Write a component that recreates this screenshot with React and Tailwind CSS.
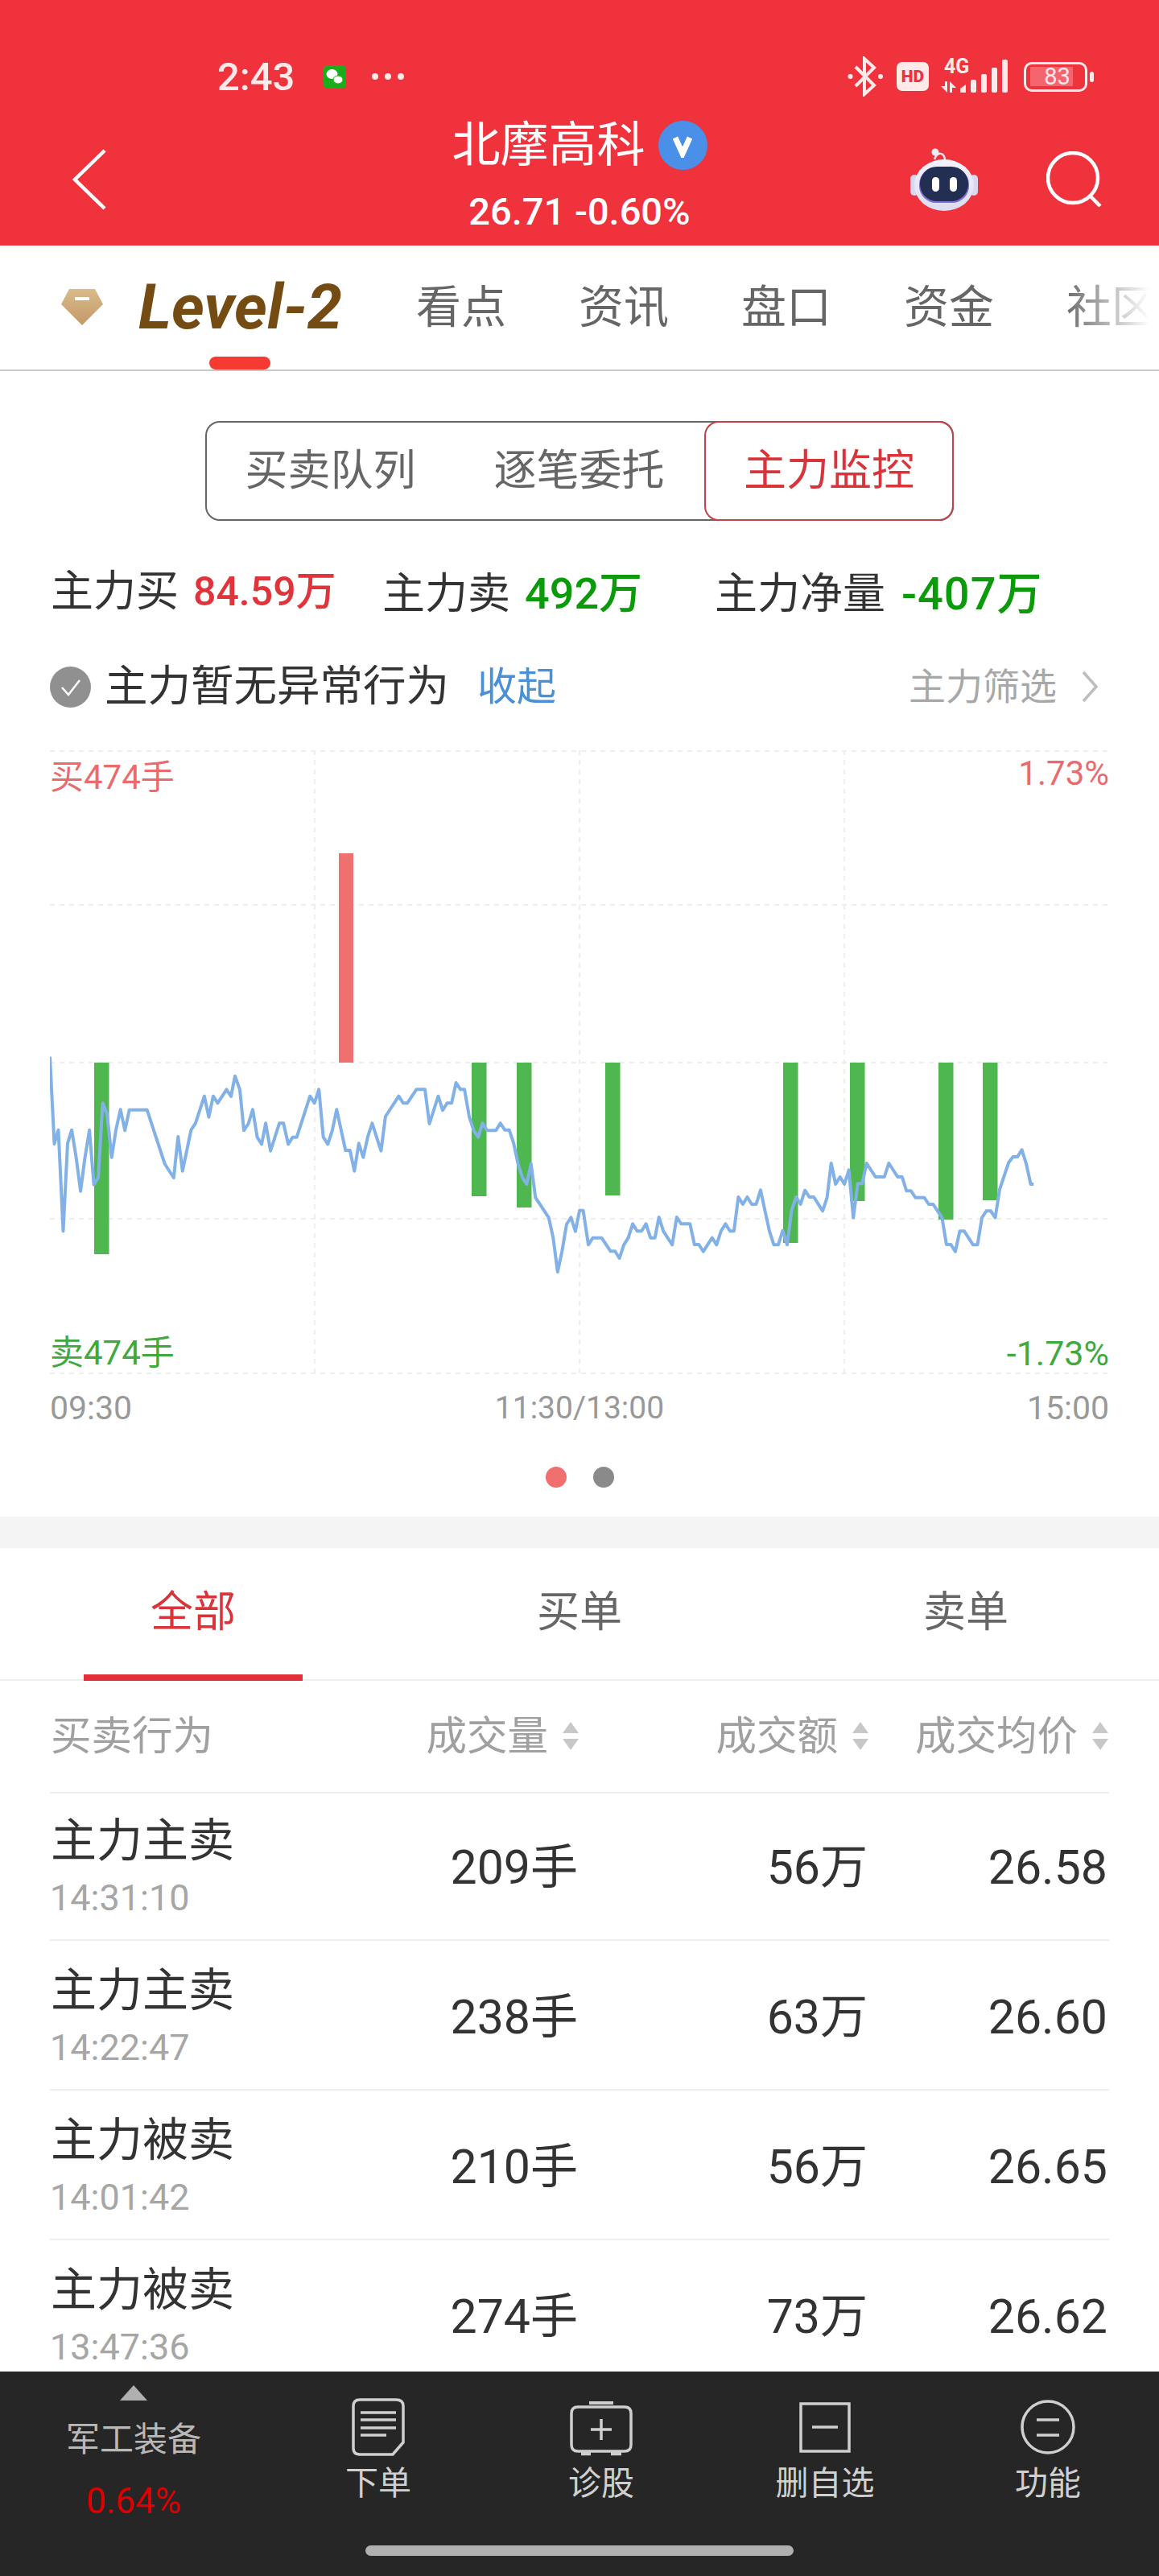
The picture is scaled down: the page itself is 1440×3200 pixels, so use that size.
const TAB_ITEMS = ['看点', '资讯', '盘口', '资金'];

const ROWS = [
  { name: '主力主卖', time: '14:31:10', vol: '209手', amount: '56万', price: '26.58' },
  { name: '主力主卖', time: '14:22:47', vol: '238手', amount: '63万', price: '26.60' },
  { name: '主力被卖', time: '14:01:42', vol: '210手', amount: '56万', price: '26.65' },
  { name: '主力被卖', time: '13:47:36', vol: '274手', amount: '73万', price: '26.62' },
];

// 分时线，坐标按页面像素换算到图表内
const LINE_LEFT = [
  [135, 95], [147, 420], [158, 368], [171, 745], [183, 418], [194, 368], [206, 470], [218, 596], [230, 470], [242, 368],
  [254, 572], [266, 545], [278, 268], [290, 310], [302, 470], [314, 365], [326, 292], [338, 370], [350, 293], [398, 293],
  [422, 395], [446, 495], [470, 546], [482, 393], [494, 521], [517, 368], [529, 343], [553, 242], [565, 320], [577, 242],
  [589, 268], [613, 217], [625, 243], [636, 167], [649, 218], [660, 370], [672, 345], [684, 292], [696, 395], [708, 421],
  [719, 343], [732, 446], [756, 343], [767, 343], [780, 421], [792, 395], [803, 395], [827, 293], [839, 242], [851, 268],
  [863, 217], [875, 395], [887, 421], [899, 370], [911, 292], [935, 444], [947, 444], [959, 521], [971, 418], [983, 470],
  [995, 395], [1007, 343], [1031, 446], [1043, 318], [1079, 242], [1091, 268], [1102, 268], [1127, 217], [1150, 217], [1162, 345],
  [1186, 242], [1198, 295], [1210, 268], [1222, 268], [1234, 192], [1246, 217], [1257, 217], [1270, 320], [1282, 370], [1294, 395],
  [1306, 343], [1318, 370], [1342, 370], [1354, 343], [1366, 368], [1378, 368], [1390, 418], [1402, 495], [1414, 546], [1425, 570],
  [1437, 494], [1449, 620], [1485, 695], [1497, 770], [1509, 897], [1521, 820], [1533, 720], [1545, 694], [1557, 746], [1568, 670],
];

const LINE_RIGHT = [
  [0, 668], [10, 668], [24, 796], [36, 770], [60, 770], [84, 820], [96, 820], [108, 846], [120, 796], [132, 770],
  [144, 718], [156, 745], [168, 745], [180, 718], [192, 770], [204, 770], [215, 693], [227, 745], [251, 796], [263, 693],
  [275, 718], [299, 718], [311, 795], [323, 795], [335, 821], [359, 770], [371, 796], [383, 745], [395, 718], [407, 745],
  [418, 745], [430, 618], [442, 645], [454, 618], [466, 645], [478, 645], [490, 592], [502, 670], [514, 745], [526, 796],
  [538, 796], [550, 743], [562, 796], [574, 668], [586, 618], [598, 645], [610, 593], [622, 618], [634, 618], [658, 670],
  [670, 620], [681, 492], [693, 570], [705, 543], [717, 570], [729, 517], [741, 695], [753, 568], [765, 568], [777, 492],
  [801, 543], [825, 543], [837, 492], [861, 543], [873, 543], [885, 595], [897, 595], [909, 620], [933, 620], [945, 645],
  [957, 645], [981, 695], [993, 795], [1005, 795], [1017, 821], [1029, 745], [1041, 745], [1065, 796], [1077, 796], [1089, 695],
  [1101, 670], [1113, 670], [1125, 695], [1137, 590], [1161, 490], [1173, 468], [1185, 468], [1197, 442], [1209, 495], [1221, 570],
  [1229, 570],
];

const linePoints = [
  ...LINE_LEFT.map(([x, y]) => [x / 2.178, 1280 + y / 3]),
  ...LINE_RIGHT.map(([x, y]) => [720 + x / 2.178, 1280 + y / 3]),
]
  .map(([x, y]) => `${(x - 62).toFixed(1)},${(y - 931).toFixed(1)}`)
  .join(' ');

const BARS = [
  { x: 117, bottom: 1557 },
  { x: 586, bottom: 1485 },
  { x: 642, bottom: 1499 },
  { x: 752, bottom: 1484 },
  { x: 973, bottom: 1543 },
  { x: 1056, bottom: 1491 },
  { x: 1166, bottom: 1514 },
  { x: 1221, bottom: 1490 },
];

const StatusBar = () => (
  <div className="h-[140px] pt-[50px] pl-[270px] pr-[81px] flex items-center text-[#ffe9e9]">
    <span className="text-[49px] leading-none font-medium">2:43</span>
    <svg className="ml-[36px]" width="28" height="29" viewBox="0 0 28 29">
      <rect width="28" height="29" rx="5" fill="#1aad19" />
      <ellipse cx="10.5" cy="11" rx="7" ry="6" fill="#fff" />
      <ellipse cx="18" cy="18" rx="6" ry="5" fill="#fff" stroke="#1aad19" strokeWidth="1" />
    </svg>
    <div className="ml-[32px] flex gap-[8px]">
      <span className="w-[8px] h-[8px] rounded-full bg-[#ffe9e9]" />
      <span className="w-[8px] h-[8px] rounded-full bg-[#ffe9e9]" />
      <span className="w-[8px] h-[8px] rounded-full bg-[#ffe9e9]" />
    </div>
    <div className="ml-auto flex items-center">
      <svg width="45" height="50" viewBox="0 0 45 50" fill="none" stroke="#ffe9e9" strokeWidth="4">
        <path d="M10 13 L33 36 L21 47 V3 L33 14 L10 37" />
        <circle cx="3.5" cy="25" r="3" fill="#ffe9e9" stroke="none" />
        <circle cx="41" cy="25" r="3" fill="#ffe9e9" stroke="none" />
      </svg>
      <div className="ml-[16px] w-[40px] h-[36px] rounded-[7px] bg-[#ffe9e9] flex items-center justify-center text-[21px] leading-none font-black text-[#f0323c]">
        HD
      </div>
      <div className="ml-[15px] relative w-[84px] h-[42px]">
        <span className="absolute left-[4px] -top-[4px] text-[25px] leading-[25px] font-bold">4G</span>
        <svg className="absolute left-0 top-0" width="84" height="42" viewBox="0 0 84 42" fill="#ffe9e9">
          <path d="M0 33 H5 V27 H8 V41 Z" />
          <path d="M11 27 L19 35 H14 V41 H11 Z" />
          <path d="M24 41 V36 L31 31 V41 Z" />
          <rect x="37" y="25" width="7" height="16" rx="2" />
          <rect x="50" y="18" width="7" height="23" rx="2" />
          <rect x="63" y="10" width="7" height="31" rx="2" />
          <rect x="76" y="0" width="7" height="41" rx="2" />
        </svg>
      </div>
      <div className="ml-[19px] relative w-[79px] h-[37px] rounded-[10px] border-[3px] border-[#ffe9e9] flex items-center justify-center">
        <span className="absolute left-[5px] top-[3px] w-[53px] h-[24px] bg-white/25" />
        <span className="relative pl-[4px] text-[29px] leading-none">83</span>
      </div>
      <span className="ml-[3px] w-[5px] h-[13px] rounded-full bg-[#ffe9e9]" />
    </div>
  </div>
);

const Robot = () => (
  <svg width="84" height="78" viewBox="0 0 84 78">
    <defs>
      <linearGradient id="shell" x1="0" y1="0" x2="0" y2="1">
        <stop offset="0" stopColor="#f4f2fb" />
        <stop offset="1" stopColor="#dcdcf2" />
      </linearGradient>
    </defs>
    <path d="M30 14 C34 3 42 6 43 14" fill="none" stroke="#f3e6ea" strokeWidth="2.5" />
    <circle cx="31" cy="5" r="4.5" fill="#f5ecef" />
    <rect x="0" y="33" width="10" height="26" rx="5" fill="#d8d8ee" />
    <rect x="74" y="33" width="10" height="26" rx="5" fill="#d8d8ee" />
    <ellipse cx="42" cy="46" rx="37" ry="32" fill="url(#shell)" />
    <rect x="11" y="24" width="62" height="44" rx="21" fill="#7f6fd8" />
    <rect x="12" y="23" width="60" height="43" rx="21" fill="#232f52" />
    <rect x="27" y="36" width="9" height="18" rx="4.5" fill="#fff" />
    <rect x="49" y="36" width="9" height="18" rx="4.5" fill="#fff" />
  </svg>
);

const Header = () => (
  <div className="h-[305px] shrink-0 bg-[#f0323c] flex flex-col">
    <StatusBar />
    <div className="h-[165px] px-[70px] grid grid-cols-[1fr_auto_1fr] items-center">
      <svg className="ml-[20px]" width="42" height="76" viewBox="0 0 42 76" fill="none" stroke="#fff" strokeWidth="4.5">
        <path d="M40 2 L3 38 L40 74" />
      </svg>
      <div className="flex flex-col items-center text-white">
        <div className="h-[62px] flex items-center -mt-[8px]">
          <span className="text-[60px] leading-none">北摩高科</span>
          <span className="ml-[16px] w-[61px] h-[61px] rounded-full bg-[#4a90e8] flex items-center justify-center">
            <svg width="30" height="30" viewBox="0 0 30 30" fill="none" stroke="#fff" strokeWidth="7">
              <path d="M6 5 L15 25 L24 5" />
            </svg>
          </span>
        </div>
        <span className="mt-[26px] text-[47px] leading-[50px] font-medium">26.71 -0.60%</span>
      </div>
      <div className="flex items-center justify-end gap-[85px]">
        <Robot />
        <svg width="70" height="70" viewBox="0 0 70 70" fill="none" stroke="#fff" strokeWidth="4.5">
          <circle cx="33" cy="33" r="31" />
          <path d="M54 55 L67 68" />
        </svg>
      </div>
    </div>
  </div>
);

const TabBar = () => (
  <div className="relative h-[156px] shrink-0 border-b-2 border-[#c9c9c9] pl-[76px] flex items-center overflow-hidden">
    <svg className="shrink-0" width="52" height="48" viewBox="0 0 52 48">
      <defs>
        <linearGradient id="gem" x1="0" y1="0" x2="0" y2="1">
          <stop offset="0" stopColor="#d9bb8c" />
          <stop offset="1" stopColor="#c49866" />
        </linearGradient>
      </defs>
      <path d="M10 1 H42 L52 20 L26 46 L0 20 Z" fill="url(#gem)" />
      <rect x="17" y="11" width="18" height="4" rx="1" fill="#fff" />
    </svg>
    <span className="ml-[44px] w-[345px] shrink-0 text-[78px] leading-none font-bold italic text-[#744b12]">Level-2</span>
    <div className="flex shrink-0 gap-[90px]">
      {TAB_ITEMS.map((tab) => (
        <span key={tab} className="w-[112px] text-[56px] leading-none text-[#666666] whitespace-nowrap">
          {tab}
        </span>
      ))}
      <span className="w-[112px] text-[56px] leading-none text-[#666666] whitespace-nowrap">社区</span>
    </div>
    <div className="absolute right-0 top-0 bottom-0 w-[120px] bg-gradient-to-r from-white/0 to-white to-90%" />
    <div className="absolute left-[260px] bottom-0 w-[76px] h-[16px] rounded-full bg-[#f53a32]" />
  </div>
);

const Segment = () => (
  <div className="mt-[62px] mx-auto w-[930px] h-[124px] shrink-0 rounded-[18px] border-2 border-[#666666] flex">
    <div className="w-[307px] flex items-center justify-center text-[53px] leading-none text-[#666666]">买卖队列</div>
    <div className="w-[311px] flex items-center justify-center text-[53px] leading-none text-[#666666]">逐笔委托</div>
    <div className="-my-[2px] -mr-[2px] flex-1 rounded-[18px] border-2 border-[#c04348] flex items-center justify-center text-[53px] leading-none text-[#d9343a]">
      主力监控
    </div>
  </div>
);

const Summary = () => (
  <div className="mt-[61px] h-[60px] shrink-0 pl-[63px] flex items-center text-[53px] leading-none text-[#333333]">
    <div className="w-[412px] mb-[6px] flex items-center gap-[18px]">
      <span>主力买</span>
      <span className="text-[50px] font-medium text-[#e0333a]">84.59万</span>
    </div>
    <div className="w-[413px] flex items-center gap-[18px]">
      <span>主力卖</span>
      <span className="text-[54px] font-medium text-[#0a9a0a]">492万</span>
    </div>
    <div className="flex items-center gap-[20px]">
      <span>主力净量</span>
      <span className="text-[56px] tracking-[1px] font-medium text-[#0a9a0a]">-407万</span>
    </div>
  </div>
);

const Notice = () => (
  <div className="mt-[55px] h-[60px] shrink-0 px-[62px] flex items-center">
    <svg width="51" height="51" viewBox="0 0 51 51" fill="none">
      <circle cx="25.5" cy="25.5" r="25.5" fill="#909090" />
      <path d="M15 26 L23 35 L37 17" stroke="#fff" strokeWidth="2.5" />
    </svg>
    <span className="ml-[17px] text-[53.5px] leading-none text-[#333333]">主力暂无异常行为</span>
    <span className="ml-[35px] text-[49px] leading-none text-[#4a90d9]">收起</span>
    <span className="ml-auto text-[46px] leading-none text-[#a8a8a8]">主力筛选</span>
    <svg className="ml-[30px] mr-[13px]" width="22" height="40" viewBox="0 0 22 40" fill="none" stroke="#bdbdbd" strokeWidth="3.5">
      <path d="M3 2 L19 20 L3 38" />
    </svg>
  </div>
);

const Chart = () => (
  <div className="relative mt-[49px] mx-[62px] h-[775px] shrink-0">
    <svg className="absolute inset-0" width="1316" height="775" viewBox="0 0 1316 775">
      <g stroke="#eeeeee" strokeWidth="2" strokeDasharray="6 6">
        {[1, 192, 388, 582, 774].map((y) => (
          <line key={y} x1="0" x2="1316" y1={y} y2={y} />
        ))}
        {[329, 658, 987].map((x) => (
          <line key={x} x1={x} x2={x} y1="0" y2="775" />
        ))}
      </g>
      <rect x="359" y="128" width="18" height="260" fill="#f07070" />
      {BARS.map((bar) => (
        <rect key={bar.x} x={bar.x - 62} y="388" width="18.5" height={bar.bottom - 1319} fill="#4fb74f" />
      ))}
      <polyline points={linePoints} fill="none" stroke="#82b1e8" strokeWidth="4" strokeLinejoin="round" />
    </svg>
    <span className="absolute left-0 top-[9px] text-[42px] leading-[50px] text-[#ea6a6e]">买474手</span>
    <span className="absolute right-0 top-[4px] text-[42px] leading-[50px] text-[#ea6a6e]">1.73%</span>
    <span className="absolute left-0 top-[724px] text-[42px] leading-[50px] text-[#3fa83f]">卖474手</span>
    <span className="absolute right-0 top-[724px] text-[43px] leading-[50px] text-[#3fa83f]">-1.73%</span>
  </div>
);

const SortArrows = () => (
  <svg width="22" height="36" viewBox="0 0 22 36" fill="#c8c8c8">
    <path d="M11 0 L21 14 H1 Z" />
    <path d="M1 21 H21 L11 35 Z" />
  </svg>
);

const ListTabs = () => (
  <div className="relative h-[165px] shrink-0 pb-[3px] border-b-2 border-[#eeeeee] grid grid-cols-3 items-center text-center text-[53px] leading-none">
    <span className="text-[#d9343a]">全部</span>
    <span className="text-[#666666]">买单</span>
    <span className="text-[#666666]">卖单</span>
    <div className="absolute left-[104px] -bottom-[2px] w-[272px] h-[8px] bg-[#e03038]" />
  </div>
);

const GRID_COLS = 'grid grid-cols-[358px_300px_360px_298px]';

const TableHead = () => (
  <div className={`mx-[62px] h-[140px] shrink-0 border-b-2 border-[#eeeeee] ${GRID_COLS} items-center text-[50.5px] leading-none text-[#a0a0a0]`}>
    <span className="pl-[1px]">买卖行为</span>
    <div className="flex items-center justify-end gap-[17px]">
      <span>成交量</span>
      <SortArrows />
    </div>
    <div className="flex items-center justify-end gap-[17px]">
      <span>成交额</span>
      <SortArrows />
    </div>
    <div className="flex items-center justify-end gap-[17px]">
      <span>成交均价</span>
      <SortArrows />
    </div>
  </div>
);

const TradeRow = ({ row }) => (
  <div className={`mx-[62px] h-[186px] first:h-[183px] shrink-0 border-b-2 border-[#f0f0f0] ${GRID_COLS} items-end text-[#333333]`}>
    <div className="pl-[1px] pb-[26px] flex flex-col">
      <span className="h-[70px] text-[57px] leading-[70px]">{row.name}</span>
      <span className="-ml-[1px] mt-[11px] h-[50px] text-[45px] leading-[50px] text-[#a6a6a6]">{row.time}</span>
    </div>
    <span className="mb-[54px] pr-[2px] text-right text-[59px] leading-[70px]">{row.vol}</span>
    <span className="mb-[54px] pr-[2px] text-right text-[59px] leading-[70px]">{row.amount}</span>
    <span className="mb-[54px] pr-[2px] text-right text-[59px] leading-[70px]">{row.price}</span>
  </div>
);

const FooterIcon = ({ children }) => (
  <svg width="80" height="72" viewBox="0 0 80 72" fill="none" stroke="#cfcfcf" strokeWidth="3.5">
    {children}
  </svg>
);

const FooterAction = ({ label, children }) => (
  <div className="pt-[33px] flex flex-col items-center">
    <FooterIcon>{children}</FooterIcon>
    <span className="mt-[9px] h-[50px] text-[41px] leading-[50px] text-[#d0d0d0]">{label}</span>
  </div>
);

const Footer = () => (
  <div className="h-[254px] shrink-0 bg-[#262626] flex flex-col">
    <div className="h-[216px] grid grid-cols-[332px_276px_278px_278px_276px]">
      <div className="pt-[17px] flex flex-col items-center">
        <svg width="36" height="19" viewBox="0 0 36 19" fill="#b0b0b0">
          <path d="M18 0 L35 19 H1 Z" />
        </svg>
        <span className="mt-[24px] h-[50px] text-[42px] leading-[50px] text-[#b8b8b8]">军工装备</span>
        <span className="mt-[26px] h-[50px] text-[44px] leading-[50px] text-[#dd0000]">0.64%</span>
      </div>
      <FooterAction label="下单">
        <path d="M17 2 H62 Q71 2 71 10 V55 L58 70 H17 Q9 70 9 62 V10 Q9 2 17 2 Z" />
        <path d="M18 18 H62 M18 27 H62 M18 37 H62 M18 46 H50" />
      </FooterAction>
      <FooterAction label="诊股">
        <path d="M25 6 H55" strokeWidth="4" />
        <path d="M3 19 Q3 11 11 11 H69 Q77 11 77 19 V58 Q77 66 69 66 H11 Q3 66 3 58 Z" />
        <path d="M40 26 V52 M27 39 H53" />
        <path d="M15 69 H27 M52 69 H65" strokeWidth="4.5" />
      </FooterAction>
      <FooterAction label="删自选">
        <rect x="10" y="7" width="60" height="59" />
        <path d="M24 36 H56" />
      </FooterAction>
      <FooterAction label="功能">
        <circle cx="40" cy="36" r="32" />
        <path d="M26 27 H54 M26 46 H54" />
      </FooterAction>
    </div>
    <div className="mx-auto w-[532px] h-[13px] rounded-full bg-[#b0b0b0]" />
  </div>
);

const App = () => (
  <div className="w-[1440px] h-[3200px] overflow-hidden bg-white flex flex-col font-['Roboto','Noto_Sans_CJK_SC',sans-serif]">
    <Header />
    <TabBar />
    <Segment />
    <Summary />
    <Notice />
    <Chart />
    <div className="mt-[17px] mx-[62px] h-[50px] shrink-0 grid grid-cols-3 items-center text-[41px] leading-none text-[#999999]">
      <span>09:30</span>
      <span className="text-center text-[39px] whitespace-nowrap">11:30/13:00</span>
      <span className="text-right">15:00</span>
    </div>
    <div className="mt-[48px] h-[26px] shrink-0 flex justify-center gap-[33px]">
      <span className="w-[26px] h-[26px] rounded-full bg-[#f07070]" />
      <span className="w-[26px] h-[26px] rounded-full bg-[#8a8a8a]" />
    </div>
    <div className="mt-[36px] h-[39px] shrink-0 bg-[#f4f4f4]" />
    <ListTabs />
    <TableHead />
    <div className="flex-1 min-h-0 overflow-hidden flex flex-col">
      {ROWS.map((row) => (
        <TradeRow key={row.time} row={row} />
      ))}
    </div>
    <Footer />
  </div>
);

export default App;
